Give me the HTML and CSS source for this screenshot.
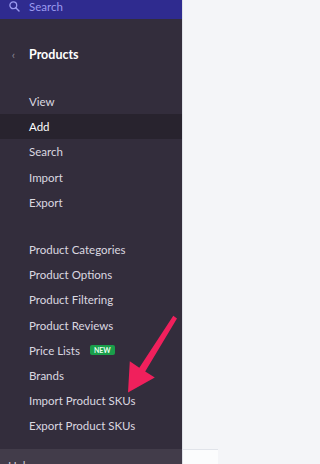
FILE: index.html
```html
<!DOCTYPE html>
<html lang="en">
<head>
<meta charset="utf-8">
<title>Products</title>
<link rel="stylesheet" href="styles.css">
</head>
<body>
<div class="app">
  <aside class="sidebar">
    <div class="search">
      <svg class="search-icon" width="11" height="11" viewBox="0 0 11 11"><circle cx="4.3" cy="4.3" r="3.4" fill="none" stroke="#9b9af0" stroke-width="1.3"/><line x1="6.8" y1="6.8" x2="10" y2="10" stroke="#9b9af0" stroke-width="1.4" stroke-linecap="round"/></svg>
      <span class="search-text">Search</span>
    </div>
    <div class="section-head">
      <span class="back">&lsaquo;</span>
      <span class="title">Products</span>
    </div>
    <ul class="menu group1">
      <li>View</li>
      <li class="active">Add</li>
      <li>Search</li>
      <li>Import</li>
      <li>Export</li>
    </ul>
    <ul class="menu group2">
      <li>Product Categories</li>
      <li>Product Options</li>
      <li>Product Filtering</li>
      <li>Product Reviews</li>
      <li>Price Lists <span class="badge">NEW</span></li>
      <li>Brands</li>
      <li>Import Product SKUs</li>
      <li>Export Product SKUs</li>
    </ul>
    <div class="help">Help</div>
  </aside>
  <main class="content">
    <div class="content-top"></div>
    <div class="content-bottom"></div>
  </main>
  <svg class="arrow" width="218" height="464" viewBox="0 0 218 464"><polygon points="173.3,315.8 177,318.4 145.2,371.6 154.8,377.6 128,392.5 129.8,361.3 139.3,367.8" fill="#f0205c"/></svg>
</div>
</body>
</html>
```
FILE: styles.css
```css
html, body {
  margin: 0;
  padding: 0;
}
body {
  width: 218px;
  height: 464px;
  overflow: hidden;
  font-family: "Lato", "Open Sans", sans-serif;
  background: #f4f5f8;
}
.app {
  position: relative;
  display: flex;
  height: 464px;
  overflow: hidden;
}
.sidebar {
  width: 182px;
  flex: none;
  background: #332d3c;
  display: flex;
  flex-direction: column;
  overflow: hidden;
}
.search {
  height: 19px;
  flex: none;
  background: #2f2b8f;
  display: flex;
  align-items: center;
  padding-left: 9px;
  gap: 9px;
}
.search-icon {
  margin-top: -6px;
}
.search-text {
  color: #9b9af0;
  font-size: 11.5px;
  margin-top: -7px;
}
.section-head {
  height: 70px;
  flex: none;
  display: flex;
  align-items: center;
}
.back {
  width: 27px;
  text-align: center;
  color: #8a8592;
  font-size: 12px;
}
.title {
  color: #ffffff;
  font-weight: 700;
  font-size: 12.5px;
  margin-left: 2px;
}
.menu {
  list-style: none;
  margin: 0;
  padding: 0;
  flex: none;
}
.menu li {
  height: 25.2px;
  line-height: 25.2px;
  padding-left: 29px;
  color: #dbd8e0;
  font-size: 11.5px;
  display: flex;
  align-items: center;
  gap: 10px;
}
.menu li.active {
  background: #28232e;
  color: #ffffff;
}
.group2 {
  margin-top: 22px;
}
.badge {
  background: #1a9e4a;
  color: #e8fff0;
  font-size: 7px;
  font-weight: 700;
  line-height: 10px;
  padding: 0 4px;
  border-radius: 2px;
}
.help {
  flex: none;
  margin-top: 10.5px;
  height: 30px;
  background: #423c4a;
  color: #cfcbd6;
  font-size: 11.5px;
  padding-left: 8px;
  padding-top: 10px;
}
.content {
  flex: 1;
  border-left: 1px solid #dfe2e8;
  display: flex;
  flex-direction: column;
}
.content-top {
  flex: 1;
  background: #f4f5f8;
  border-bottom: 1px solid #e1e4ea;
}
.content-bottom {
  height: 14px;
  flex: none;
  background: #fbfcfd;
}
.arrow {
  position: absolute;
  left: 0;
  top: 0;
  pointer-events: none;
}
```
